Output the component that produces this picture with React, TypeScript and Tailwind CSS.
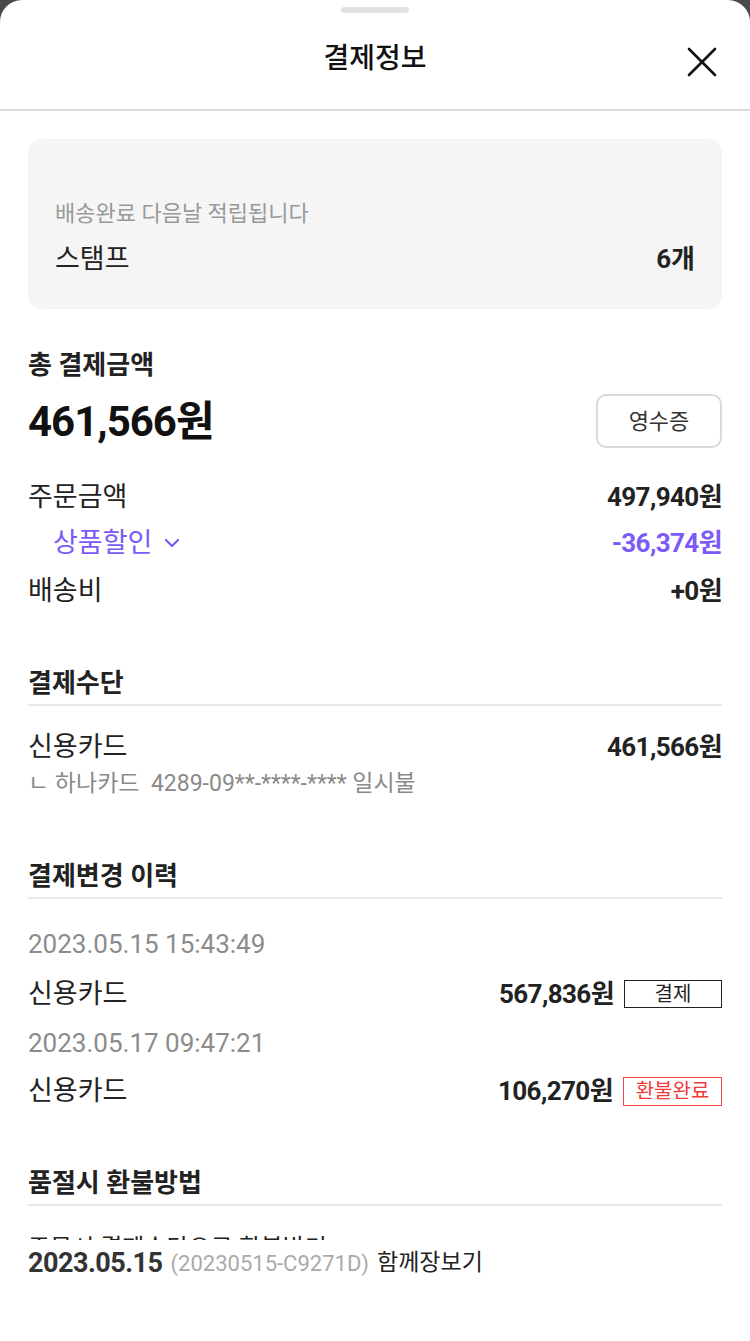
import React from 'react';

const font = { fontFamily: 'Roboto, "Noto Sans CJK KR", sans-serif' };

const Row: React.FC<{ label: string; value: string; className?: string; children?: React.ReactNode }> = ({ label, value, className, children }) => (
  <div className={`flex h-[32px] items-center justify-between ${className ?? ''}`}>
    <span className="text-[27px] text-[#222]">{label}</span>
    <div className="flex items-center gap-[10px]">
      <span className="text-[26px] font-bold tracking-[-0.6px] text-[#222]">{value}</span>
      {children}
    </div>
  </div>
);

const SectionTitle: React.FC<{ title: string; className?: string }> = ({ title, className }) => (
  <div className={`border-b-2 border-[#e8e8e8] pb-[7px] ${className ?? ''}`}>
    <h3 className="h-[28px] text-[26px] font-bold leading-[28px] text-[#222]">{title}</h3>
  </div>
);

const App: React.FC = () => {
  return (
    <div className="h-[1341px] w-[750px] bg-[#4a4a4a]" style={font}>
      <div className="flex h-full flex-col overflow-hidden rounded-t-[22px] bg-white">
        {/* header */}
        <div className="relative h-[111px] shrink-0 border-b-2 border-[#dcdcdc]">
          <div className="mx-auto mt-[7px] h-[6px] w-[68px] rounded-full bg-[#e2e2e2]" />
          <h2 className="mt-[30px] text-center text-[28px] font-medium leading-[32px] text-[#111]">결제정보</h2>
          <button className="absolute right-[32px] top-[46px]" aria-label="닫기">
            <svg width="32" height="32" viewBox="0 0 32 32" fill="none" stroke="#111" strokeWidth="2.6" strokeLinecap="round">
              <path d="M3 3 L29 29 M29 3 L3 29" />
            </svg>
          </button>
        </div>

        {/* scroll content */}
        <div className="h-[1129px] shrink-0 overflow-hidden px-[28px]">
          <div className="mt-[28px] h-[170px] rounded-[14px] bg-[#f5f5f5] px-[27px] pt-[62px]">
            <p className="h-[26px] text-[22px] leading-[26px] text-[#999]">배송완료 다음날 적립됩니다</p>
            <div className="mt-[16px] flex h-[32px] items-center justify-between">
              <span className="text-[27px] text-[#222]">스탬프</span>
              <span className="text-[26px] font-bold text-[#222]">6개</span>
            </div>
          </div>

          <h3 className="mt-[42px] h-[28px] text-[26px] font-bold leading-[28px] text-[#222]">총 결제금액</h3>
          <div className="mt-[15px] flex h-[54px] items-center justify-between">
            <span className="text-[42px] font-bold tracking-[-1px] text-[#111]">461,566원</span>
            <button className="h-[54px] w-[126px] rounded-[10px] border-2 border-[#dadada] text-[22px] text-[#333]">영수증</button>
          </div>

          <Row label="주문금액" value="497,940원" className="mt-[33px]" />
          <div className="mt-[14px] flex h-[32px] items-center justify-between">
            <span className="flex items-center gap-[12px] pl-[25px] text-[27px] text-[#7b5af7]">
              상품할인
              <svg width="16" height="10" viewBox="0 0 16 10" fill="none" stroke="#7b5af7" strokeWidth="2.2" strokeLinecap="round" strokeLinejoin="round">
                <path d="M2 2 L8 8 L14 2" />
              </svg>
            </span>
            <span className="text-[26px] font-bold tracking-[-0.6px] text-[#7b5af7]">-36,374원</span>
          </div>
          <Row label="배송비" value="+0원" className="mt-[16px]" />

          <SectionTitle title="결제수단" className="mt-[62px]" />
          <Row label="신용카드" value="461,566원" className="mt-[25px]" />
          <p className="mt-[7px] h-[28px] text-[23px] leading-[28px] text-[#8a8a8a]">ㄴ 하나카드&nbsp;&nbsp;4289-09**-****-**** 일시불</p>

          <SectionTitle title="결제변경 이력" className="mt-[64px]" />
          <p className="mt-[31px] h-[28px] text-[26px] leading-[28px] text-[#8c8c8c]">2023.05.15 15:43:49</p>
          <Row label="신용카드" value="567,836원" className="mt-[20px]">
            <span className="flex h-[28px] w-[98px] items-center justify-center border-[1.5px] border-[#222] text-[20px] text-[#222]">결제</span>
          </Row>
          <p className="mt-[19px] h-[28px] text-[26px] leading-[28px] text-[#8c8c8c]">2023.05.17 09:47:21</p>
          <Row label="신용카드" value="106,270원" className="mt-[18px]">
            <span className="flex h-[29px] w-[99px] items-center justify-center border-[1.5px] border-[#f44646] text-[20px] text-[#f03a3a]">환불완료</span>
          </Row>

          <SectionTitle title="품절시 환불방법" className="mt-[62px]" />
          <p className="mt-[28px] h-[28px] text-[24px] leading-[28px] text-[#222]">주문시 결제수단으로 환불받기</p>
        </div>

        {/* bottom info */}
        <div className="flex h-[46px] shrink-0 items-center gap-[8px] px-[28px]">
          <span className="text-[27px] font-bold tracking-[-0.5px] text-[#333]">2023.05.15</span>
          <span className="text-[22px] text-[#aaa]">(20230515-C9271D)</span>
          <span className="text-[23px] text-[#222]">함께장보기</span>
        </div>
      </div>
    </div>
  );
};

export default App;
